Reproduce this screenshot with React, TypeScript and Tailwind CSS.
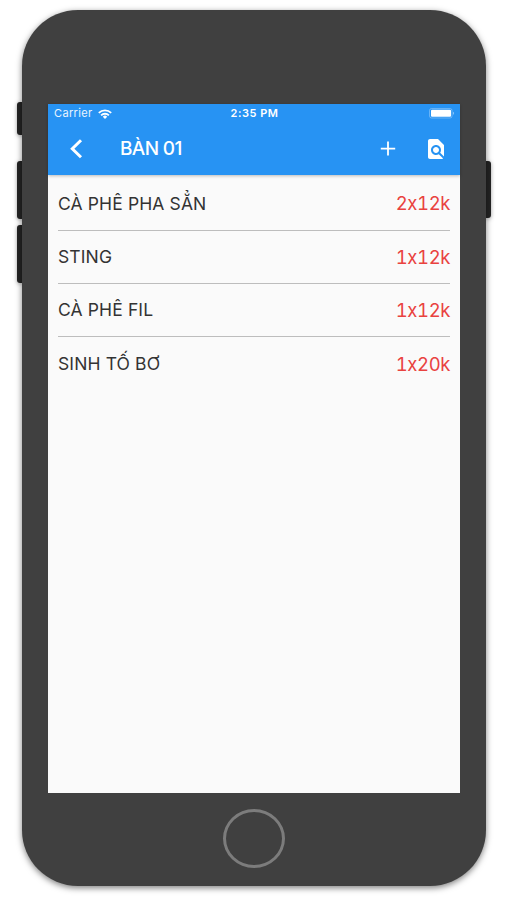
import React from "react";
import clsx from "clsx";

type OrderItem = {
    id: number;
    name: string;
    quantity: number;
    price: string;
};

const items: OrderItem[] = [
    { id: 1, name: "CÀ PHÊ PHA SẲN", quantity: 2, price: "12k" },
    { id: 2, name: "STING", quantity: 1, price: "12k" },
    { id: 3, name: "CÀ PHÊ FIL", quantity: 1, price: "12k" },
    { id: 4, name: "SINH TỐ BƠ", quantity: 1, price: "20k" },
];

const SideButton: React.FC<{ className: string }> = ({ className }) => (
    <span
        className={clsx(
            "absolute w-1.5 bg-[#242424] shadow-[0_1px_4px_rgba(0,0,0,0.35)]",
            className
        )}
    />
);

const StatusBar: React.FC = () => (
    <div className="grid h-5 grid-cols-3 items-center pl-1.5 pr-[5px] text-[11px] leading-none text-white">
        <div className="flex items-center gap-[5px]">
            <span className="tracking-[0.35px] text-white/90">Carrier</span>
            <svg width="14" height="10" viewBox="0 0 14 10" fill="none" stroke="currentColor" strokeWidth="1.8">
                <path d="M.8 3.8a8.9 8.9 0 0 1 12.4 0" />
                <path d="M3.1 6.4a5.4 5.4 0 0 1 7.8 0" />
                <path d="M7 9.9 4.8 7.8a3 3 0 0 1 4.4 0Z" fill="currentColor" stroke="none" />
            </svg>
        </div>
        <span className="text-center font-semibold tracking-[0.5px]">2:35 PM</span>
        <svg className="justify-self-end" width="26" height="11" viewBox="0 0 26 11" fill="currentColor">
            <rect x=".5" y=".5" width="22.5" height="9.5" rx="2" fill="none" stroke="currentColor" strokeOpacity=".3" />
            <rect x="2" y="1.8" width="20" height="7" rx="1" />
            <path d="M24 3.8c1.4.4 1.4 2.6 0 3Z" fillOpacity=".45" />
        </svg>
    </div>
);

const AppBar: React.FC = () => (
    <header className="relative bg-[#2793f3] text-white shadow-[0_1px_3px_rgba(0,0,0,0.25)]">
        <StatusBar />
        <div className="flex h-[51px] items-center pl-[21px] pr-3">
            <svg width="14" height="20" viewBox="0 0 14 20" fill="none" stroke="currentColor" strokeWidth="3">
                <path d="M12 1.3 3.3 9.8 12 18.3" />
            </svg>
            <h1 className="ml-[37px] text-[19px] font-medium tracking-[-0.65px]">BÀN 01</h1>
            <svg className="ml-auto" width="16" height="16" viewBox="0 0 16 16" stroke="currentColor" strokeWidth="1.8">
                <path d="M8 .6v14M.8 7.6h14.4" />
            </svg>
            {/* Bill preview */}
            <svg className="ml-[28px]" width="24" height="24" viewBox="0 0 24 24" fill="currentColor">
                <path d="M20 19.59V8l-6-6H6c-1.1 0-1.99.9-1.99 2L4 20c0 1.1.89 2 1.99 2H18c.45 0 .85-.15 1.19-.4l-4.43-4.43c-.8.52-1.74.83-2.76.83-2.76 0-5-2.24-5-5s2.24-5 5-5 5 2.24 5 5c0 1.02-.31 1.96-.83 2.75L20 19.59zM9 13c0 1.66 1.34 3 3 3s3-1.34 3-3-1.34-3-3-3-3 1.34-3 3z" />
            </svg>
        </div>
    </header>
);

const OrderRow: React.FC<{ item: OrderItem }> = ({ item }) => (
    <li className="flex h-[53.3px] items-center justify-between border-b border-[#bdbdbd] last:border-b-0">
        <span className="text-[17.5px] tracking-[0.12px] text-[#333333]">{item.name}</span>
        <span className="pt-px text-[18.5px] tracking-[-0.4px] tabular-nums text-[#e9423f]">
            {`${item.quantity}x${item.price}`}
        </span>
    </li>
);

export default function App() {
    return (
        <main className="h-[900px] w-[507px] overflow-hidden bg-white pl-[22px] pt-[9.5px] font-['Inter','Liberation_Sans',sans-serif]">
            <div className="relative h-[876.5px] w-[464px]">
                <SideButton className="-left-[5px] top-[92px] h-[33px] rounded-l-[3px]" />
                <SideButton className="-left-[5px] top-[151px] h-[58px] rounded-l-[3px]" />
                <SideButton className="-left-[5px] top-[215px] h-[58px] rounded-l-[3px]" />
                <SideButton className="-right-[5px] top-[151px] h-[57px] rounded-r-[3px]" />

                <div className="relative flex h-full flex-col items-center rounded-[56px] bg-[#404040] pt-[94px] shadow-[0_2px_6px_rgba(0,0,0,0.5)]">
                    <section className="h-[689px] w-[412px] bg-[#fafafa]">
                        <AppBar />
                        <ul className="px-2.5 pt-[3px]">
                            {items.map((item) => (
                                <OrderRow key={item.id} item={item} />
                            ))}
                        </ul>
                    </section>

                    {/* Home button */}
                    <div className="mt-[16px] h-[59px] w-[62px] rounded-[50%] border-[3px] border-[#7c7c7c]" />
                </div>
            </div>
        </main>
    );
}
